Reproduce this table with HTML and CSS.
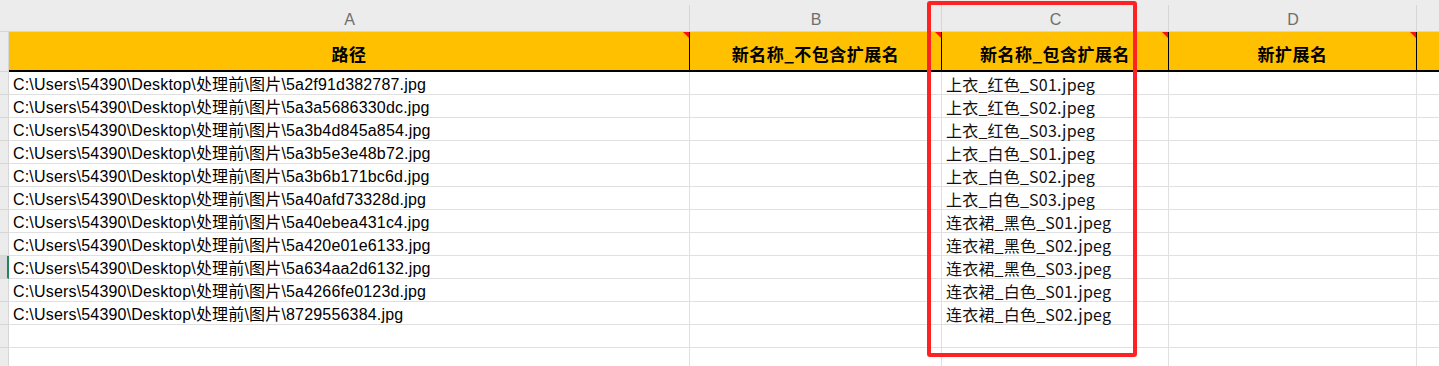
FILE: index.html
```html
<!DOCTYPE html>
<html lang="zh-CN">
<head>
<meta charset="utf-8">
<title>Sheet</title>
<link rel="stylesheet" href="styles.css">
</head>
<body>
<div class="sheet">
  <div class="grid">
    <div class="band corner"></div>
    <div class="band">A</div>
    <div class="band">B</div>
    <div class="band">C</div>
    <div class="band">D</div>
    <div class="band last"></div>

    <div class="rh"></div>
    <div class="hd note">路径</div>
    <div class="hd note">新名称_不包含扩展名</div>
    <div class="hd note">新名称_包含扩展名</div>
    <div class="hd note">新扩展名</div>
    <div class="hd last"></div>

    <div class="rh"></div><div class="c path">C:\Users\54390\Desktop\处理前\图片\5a2f91d382787.jpg</div><div class="c"></div><div class="c name">上衣_红色_S01.jpeg</div><div class="c"></div><div class="c last"></div>
    <div class="rh"></div><div class="c path">C:\Users\54390\Desktop\处理前\图片\5a3a5686330dc.jpg</div><div class="c"></div><div class="c name">上衣_红色_S02.jpeg</div><div class="c"></div><div class="c last"></div>
    <div class="rh"></div><div class="c path">C:\Users\54390\Desktop\处理前\图片\5a3b4d845a854.jpg</div><div class="c"></div><div class="c name">上衣_红色_S03.jpeg</div><div class="c"></div><div class="c last"></div>
    <div class="rh"></div><div class="c path">C:\Users\54390\Desktop\处理前\图片\5a3b5e3e48b72.jpg</div><div class="c"></div><div class="c name">上衣_白色_S01.jpeg</div><div class="c"></div><div class="c last"></div>
    <div class="rh"></div><div class="c path">C:\Users\54390\Desktop\处理前\图片\5a3b6b171bc6d.jpg</div><div class="c"></div><div class="c name">上衣_白色_S02.jpeg</div><div class="c"></div><div class="c last"></div>
    <div class="rh"></div><div class="c path">C:\Users\54390\Desktop\处理前\图片\5a40afd73328d.jpg</div><div class="c"></div><div class="c name">上衣_白色_S03.jpeg</div><div class="c"></div><div class="c last"></div>
    <div class="rh"></div><div class="c path">C:\Users\54390\Desktop\处理前\图片\5a40ebea431c4.jpg</div><div class="c"></div><div class="c name">连衣裙_黑色_S01.jpeg</div><div class="c"></div><div class="c last"></div>
    <div class="rh"></div><div class="c path">C:\Users\54390\Desktop\处理前\图片\5a420e01e6133.jpg</div><div class="c"></div><div class="c name">连衣裙_黑色_S02.jpeg</div><div class="c"></div><div class="c last"></div>
    <div class="rh active"></div><div class="c path">C:\Users\54390\Desktop\处理前\图片\5a634aa2d6132.jpg</div><div class="c"></div><div class="c name">连衣裙_黑色_S03.jpeg</div><div class="c"></div><div class="c last"></div>
    <div class="rh"></div><div class="c path">C:\Users\54390\Desktop\处理前\图片\5a4266fe0123d.jpg</div><div class="c"></div><div class="c name">连衣裙_白色_S01.jpeg</div><div class="c"></div><div class="c last"></div>
    <div class="rh"></div><div class="c path">C:\Users\54390\Desktop\处理前\图片\8729556384.jpg</div><div class="c"></div><div class="c name">连衣裙_白色_S02.jpeg</div><div class="c"></div><div class="c last"></div>
    <div class="rh"></div><div class="c"></div><div class="c"></div><div class="c"></div><div class="c"></div><div class="c last"></div>
    <div class="rh"></div><div class="c"></div><div class="c"></div><div class="c"></div><div class="c"></div><div class="c last"></div>
  </div>
  <div class="highlight"></div>
</div>
</body>
</html>
```

FILE: styles.css
```css
* { box-sizing: border-box; }
html, body { margin: 0; padding: 0; background: #fff; overflow: hidden; }
.sheet { position: relative; width: 1439px; height: 366px; overflow: hidden; }
.grid {
  display: grid;
  grid-template-columns: 9px 681px 252px 227px 248px 1fr;
  grid-template-rows: 32px 40px repeat(13, 23px);
  font-family: "Liberation Sans", "Noto Sans CJK SC", sans-serif;
  color: #000;
}
.band {
  background: linear-gradient(#d6d6d6, #d6d6d6) right bottom / 1px 26px no-repeat, #ececec;
  border-bottom: 1px solid #d6d6d6;
  display: flex;
  align-items: center;
  justify-content: center;
  padding-top: 9px;
  font-family: "Liberation Sans", sans-serif;
  font-size: 16px;
  color: #6e6e6e;
}
.band.corner, .band.last { background: #ececec; }
.rh {
  background: #ececec;
  border-right: 1px solid #d6d6d6;
  border-bottom: 1px solid #d6d6d6;
}
.rh.active {
  background: #dadada;
  border-right: 2px solid #21845a;
}
.hd {
  position: relative;
  background: #ffc000;
  border-right: 1px solid #000;
  border-bottom: 2px solid #000;
  display: flex;
  align-items: center;
  justify-content: center;
  padding-top: 4px;
  font-family: "Noto Sans CJK SC", sans-serif;
  font-weight: 700;
  font-size: 17px;
  letter-spacing: 0.5px;
}
.hd.last { border-right: none; }
.hd.note::after {
  content: "";
  position: absolute;
  top: 0;
  right: 0;
  border-top: 6px solid #ff1010;
  border-left: 6px solid transparent;
}
.c {
  border-right: 1px solid #e0e0e0;
  border-bottom: 1px solid #e0e0e0;
  padding-left: 4px;
  padding-top: 2px;
  white-space: nowrap;
  overflow: visible;
  line-height: 21px;
  font-size: 16px;
}
.c.last { border-right: none; }
.path { font-family: "Liberation Sans", "Noto Sans CJK SC", sans-serif; letter-spacing: 0.18px; }
.name { font-family: "Noto Sans CJK SC", sans-serif; font-weight: 400; color: #111; letter-spacing: 0.2px; }
.highlight {
  position: absolute;
  left: 927px;
  top: 1px;
  width: 210px;
  height: 356px;
  border: 4px solid #ff2222;
  border-radius: 3px;
}
```
